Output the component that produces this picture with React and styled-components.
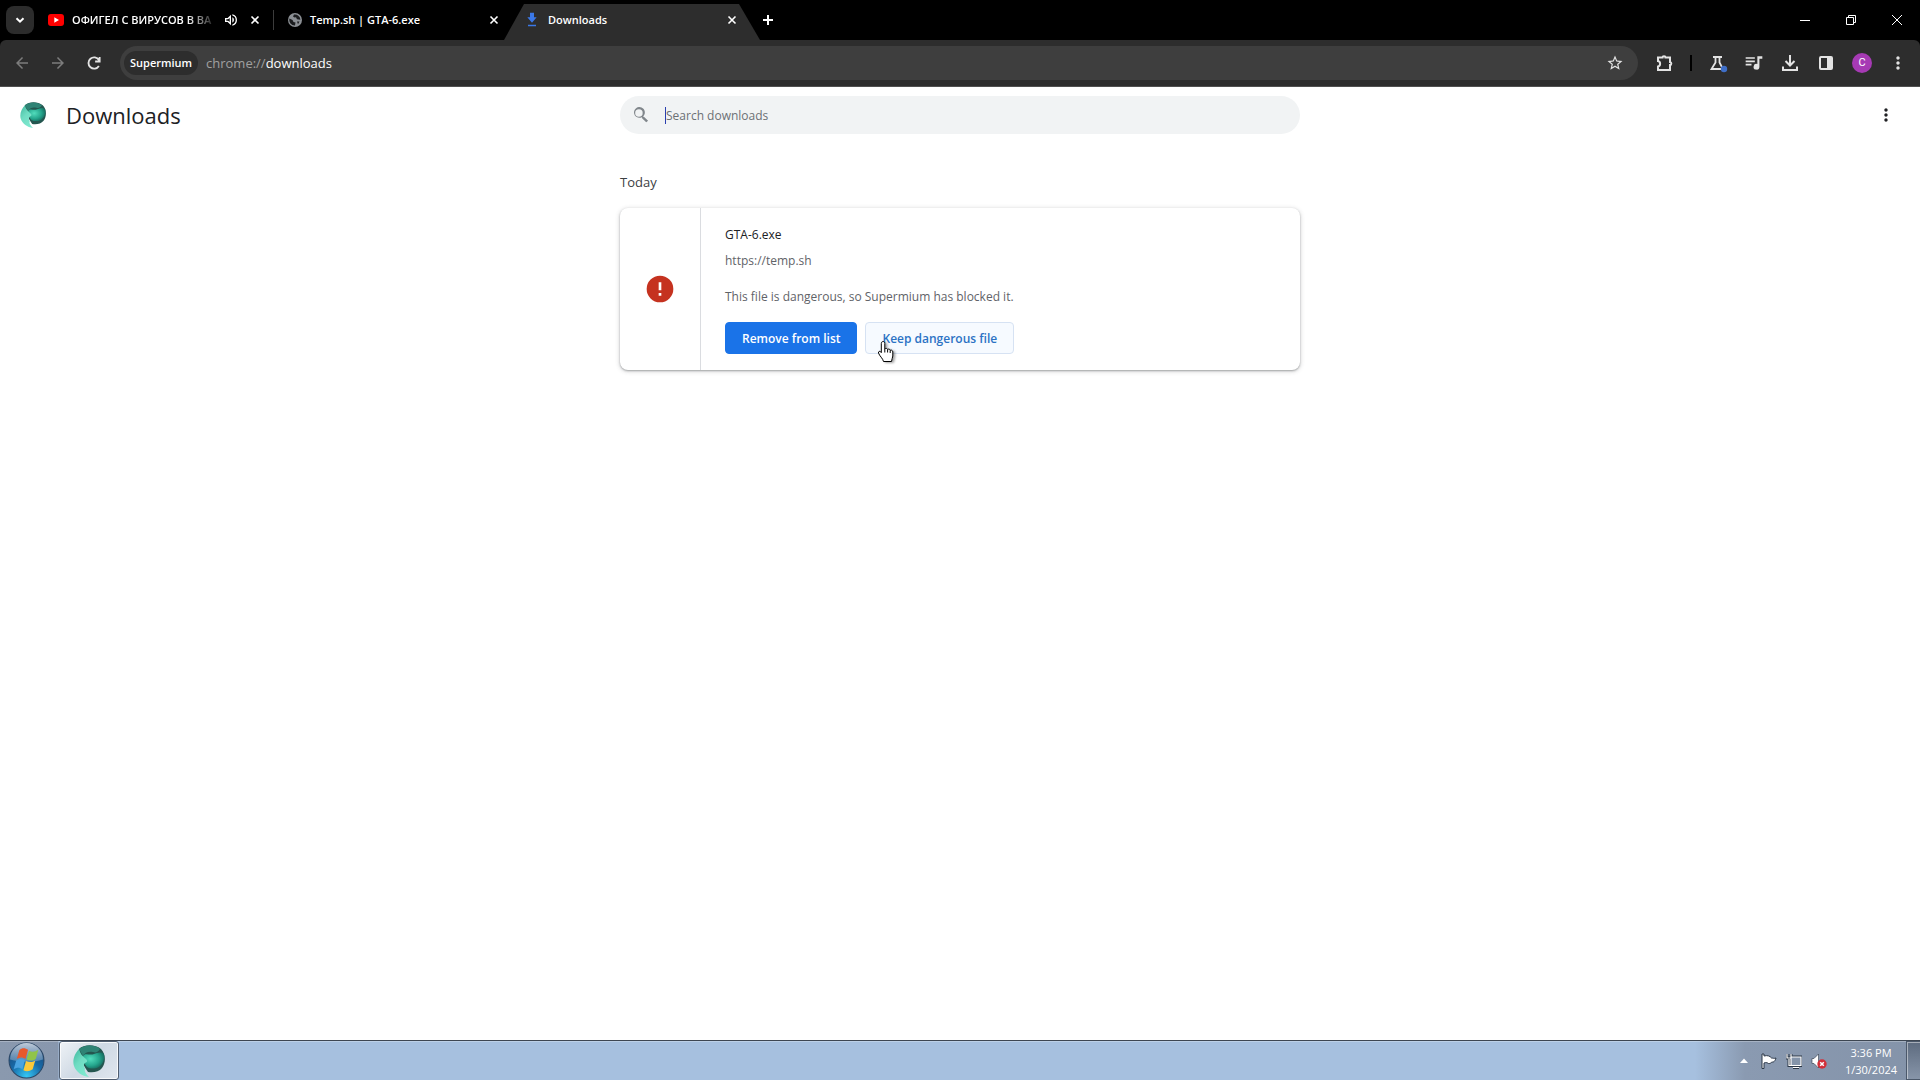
import styled, { createGlobalStyle, css } from "styled-components";

const GlobalStyle = createGlobalStyle`
  * {
    box-sizing: border-box;
  }
  body {
    margin: 0;
    background-color: #fff;
    color: #202124;
    font-family: "Open Sans", "Noto Sans", sans-serif;
    font-size: 12px;
  }
  button {
    border: none;
    background: none;
    padding: 0;
    margin: 0;
    color: inherit;
    font-family: inherit;
    font-size: inherit;
  }
  svg {
    display: block;
    flex: none;
  }
`;

const Screen = styled.div`
  display: flex;
  flex-direction: column;
  min-height: 100vh;
  background-color: #000;
`;

/* tab strip */

const TabStrip = styled.header`
  display: flex;
  align-items: center;
  height: 40px;
  padding-left: 6px;
  color: #fff;
`;

const TabSearch = styled.button`
  display: flex;
  align-items: center;
  justify-content: center;
  width: 28px;
  height: 28px;
  border-radius: 8px;
  background-color: #2c2c2c;
`;

const Tab = styled.div`
  display: flex;
  align-items: center;
  gap: 8px;
  width: 240px;
  height: 20px;
  padding: 0 12px 0 14px;
  ${(props) =>
    props.$divider &&
    css`
      padding-right: 10px;
      border-right: 1px solid #3c3c3c;
    `}
  ${(props) =>
    props.$active &&
    css`
      width: 256px;
      height: 36px;
      margin-left: -10px;
      padding: 0 20px 4px;
      align-self: flex-end;
      background-color: #2d2d2d;
      clip-path: polygon(20px 0, 235px 0, 100% 100%, 0 100%);
    `}
`;

const TabTitle = styled.span`
  flex: 1;
  min-width: 0;
  white-space: nowrap;
  font-size: 11px;
  font-weight: 600;
  line-height: 20px;
  ${(props) =>
    props.$fade &&
    css`
      mask-image: linear-gradient(to right, #000 115px, transparent 145px);
    `}
`;

const IconButton = styled.button`
  display: flex;
  align-items: center;
  justify-content: center;
  flex: none;
  width: 16px;
  height: 16px;
`;

const WindowControls = styled.div`
  display: flex;
  margin-left: auto;
`;

const WindowButton = styled.button`
  display: flex;
  align-items: center;
  justify-content: center;
  width: 46px;
  height: 40px;
`;

/* toolbar */

const Toolbar = styled.nav`
  display: flex;
  align-items: center;
  height: 47px;
  padding: 0 4px;
  border-bottom: 1px solid #505050;
  border-radius: 6px 6px 0 0;
  background-color: #2d2d2d;
  color: #e3e3e3;
`;

const NavButtons = styled.div`
  display: flex;
  margin-right: 8px;
`;

const ToolButton = styled(IconButton)`
  width: 36px;
  height: 36px;
  color: ${(props) => (props.$muted ? "#7c7c7c" : "#e3e3e3")};
`;

const Omnibox = styled.div`
  display: flex;
  align-items: center;
  flex: 1;
  height: 34px;
  margin-right: 8px;
  padding: 0 15px 0 4px;
  border-radius: 17px;
  background-color: #3e3e3e;
`;

const Chip = styled.span`
  padding: 0 6px;
  border-radius: 12px;
  background-color: #2d2d2d;
  color: #fff;
  font-size: 11px;
  font-weight: 600;
  line-height: 24px;
`;

const Address = styled.a`
  flex: 1;
  margin-left: 8px;
  color: #a0a0a0;
  font-size: 13px;
  text-decoration: none;
  span {
    color: #fff;
  }
`;

const ToolDivider = styled.span`
  width: 2px;
  height: 16px;
  margin: 0 8px;
  background-color: #000;
`;

const Avatar = styled.span`
  width: 20px;
  height: 20px;
  border-radius: 50%;
  background-color: #a63ab4;
  color: #fff;
  font-family: Roboto, sans-serif;
  font-size: 11px;
  line-height: 20px;
  text-align: center;
`;

/* downloads page */

const Page = styled.main`
  flex: 1;
  background-color: #fff;
`;

const PageHeader = styled.div`
  display: grid;
  grid-template-columns: 1fr 680px 1fr;
  align-items: center;
  height: 56px;
  padding: 0 20px;
`;

const Brand = styled.div`
  display: flex;
  align-items: center;
  gap: 20px;
`;

const PageTitle = styled.h1`
  margin: 0;
  font-size: 22px;
  font-weight: 400;
  line-height: 28px;
`;

const SearchBox = styled.label`
  display: flex;
  align-items: center;
  height: 38px;
  padding: 0 11px;
  border-radius: 19px;
  background-color: #f1f3f4;
  color: #80868b;
`;

const Caret = styled.span`
  width: 1px;
  height: 17px;
  margin-left: 14px;
  background-color: #2a3fb0;
`;

const SearchInput = styled.input`
  flex: 1;
  padding: 0;
  border: none;
  outline: none;
  background: none;
  color: #202124;
  font-family: inherit;
  font-size: 12px;
  &::placeholder {
    color: #6c7074;
    opacity: 1;
  }
`;

const MenuButton = styled(IconButton)`
  justify-self: end;
  width: 28px;
  height: 28px;
  color: #202124;
`;

const List = styled.section`
  width: 680px;
  margin: 0 auto;
  padding-top: 29px;
`;

const DateHeading = styled.h2`
  margin: 0 0 16px;
  color: #3c4043;
  font-size: 13px;
  font-weight: 400;
  line-height: 20px;
`;

const Card = styled.article`
  display: flex;
  border-radius: 8px;
  background-color: #fff;
  box-shadow: 0 1px 2px rgba(60, 64, 67, 0.4), 0 1px 4px 1px rgba(60, 64, 67, 0.16);
`;

const FileIcon = styled.div`
  display: flex;
  align-items: center;
  justify-content: center;
  width: 81px;
  border-right: 1px solid #dadce0;
  color: #c5321f;
`;

const FileInfo = styled.div`
  padding: 17px 24px 16px;
  line-height: 20px;
`;

const FileName = styled.div`
  font-weight: 500;
`;

const FileUrl = styled.a`
  display: block;
  margin-top: 6px;
  color: #5f6368;
  text-decoration: none;
`;

const Warning = styled.p`
  margin: 16px 0 15px;
  color: #5f6368;
`;

const Actions = styled.div`
  display: flex;
  gap: 8px;
`;

const ActionButton = styled.button`
  position: relative;
  height: 32px;
  padding: 0 16px;
  border: 1px solid ${(props) => (props.$primary ? "#1a73e8" : "#d6e2f3")};
  border-radius: 4px;
  background-color: ${(props) => (props.$primary ? "#1a73e8" : "#f6faff")};
  color: ${(props) => (props.$primary ? "#fff" : "#2b72c4")};
  font-weight: 600;
`;

const Pointer = styled.svg`
  position: absolute;
  left: 11px;
  top: 17px;
  filter: drop-shadow(2px 1px 1px rgba(0, 0, 0, 0.35));
`;

/* taskbar */

const Taskbar = styled.footer`
  display: flex;
  align-items: stretch;
  height: 40px;
  border-top: 1px solid #3d4652;
  background: linear-gradient(to right, #8a99ae, #8897ad 58px, transparent 59px),
    linear-gradient(to left, #8493a9, #8a9ab1 175px, #a6c0df 225px);
  box-shadow: inset 0 1px 0 rgba(255, 255, 255, 0.25);
  color: #fff;
`;

const StartButton = styled.button`
  display: flex;
  align-items: center;
  width: 59px;
  padding-left: 8px;
`;

const TaskButton = styled.button`
  display: flex;
  align-items: center;
  justify-content: center;
  width: 60px;
  border: 1px solid #4f5d70;
  border-radius: 3px;
  background: linear-gradient(135deg, #eef2f6, #cfd9e4 50%, #dfe6ee);
  box-shadow: inset 0 0 0 1px rgba(255, 255, 255, 0.8);
`;

const Tray = styled.div`
  display: flex;
  align-items: center;
  gap: 9px;
  margin-left: auto;
`;

const Clock = styled.time`
  width: 70px;
  font-size: 11px;
  line-height: 17px;
  text-align: center;
`;

const ShowDesktop = styled.button`
  width: 14px;
  border: 1px solid #4b586a;
  border-right: none;
  background: linear-gradient(#5d6b7f, #8795a9);
  box-shadow: inset 1px 1px 0 rgba(255, 255, 255, 0.45);
`;

const Icon = ({ d, size = 20, viewBox = "0 0 24 24", stroke, color = "currentColor" }) => (
  <svg
    width={size}
    height={size}
    viewBox={viewBox}
    fill={stroke ? "none" : color}
    stroke={stroke ? color : "none"}
    strokeWidth={stroke}
    aria-hidden="true"
  >
    <path d={d} />
  </svg>
);

const CloseIcon = () => <Icon size={10} viewBox="0 0 10 10" stroke={1.6} d="M1.5 1.5l7 7M8.5 1.5l-7 7" />;

const DotsIcon = () => (
  <Icon d="M12 8c1.1 0 2-.9 2-2s-.9-2-2-2-2 .9-2 2 .9 2 2 2zm0 2c-1.1 0-2 .9-2 2s.9 2 2 2 2-.9 2-2-.9-2-2-2zm0 6c-1.1 0-2 .9-2 2s.9 2 2 2 2-.9 2-2-.9-2-2-2z" />
);

const SupermiumLogo = ({ size, id }) => (
  <svg width={size} height={size} viewBox="0 0 32 32" aria-hidden="true">
    <defs>
      <radialGradient id={`${id}-ball`} cx="0.35" cy="0.4" r="0.7">
        <stop offset="0" stopColor="#52dcbc" />
        <stop offset="0.6" stopColor="#25a68d" />
        <stop offset="1" stopColor="#14665a" />
      </radialGradient>
      <linearGradient id={`${id}-wing`} x1="0" y1="0" x2="0.6" y2="1">
        <stop offset="0" stopColor="#3fb89e" />
        <stop offset="0.5" stopColor="#6fdcc2" />
        <stop offset="1" stopColor="#7ee8cf" />
      </linearGradient>
    </defs>
    <path d="M6 4C11-1 22-1 28 4c5 5 5 14 1 19-3 4-9 5-14 4C10 20 6 12 6 4z" fill="#24564f" />
    <path d="M10 11c2-4 7 0 11-2 3-1 7-3 10 0 1 5-1 10-5 13-4 2-9 2-12 0-3-3-4-7-4-11z" fill={`url(#${id}-ball)`} />
    <path d="M6 4C11 0 21-1 27 4c-2 3-4 4-7 3-4-1-8 0-10 4z" fill="#2f8375" />
    <path
      d="M6 4C2 8-1 15 1 21c2 6 8 10 15 11-3-3-5-6-4-8-1-3-2-4 0-6 2-1 3-2 1-4C9 11 7 8 6 4z"
      fill={`url(#${id}-wing)`}
    />
  </svg>
);

const YoutubeIcon = () => (
  <svg width="16" height="16" viewBox="0 0 16 16" aria-hidden="true">
    <rect y="2" width="16" height="12" rx="3" fill="#f00" />
    <path d="M6.3 5.2v5.6L11 8z" fill="#fff" />
  </svg>
);

const GlobeIcon = () => (
  <svg width="14" height="14" viewBox="0 0 14 14" aria-hidden="true">
    <circle cx="7" cy="7" r="7" fill="#8b8f94" />
    <path
      d="M1.500 5.500l3 1.500 1 2 2 .5-.5 3A5.500 5.500 0 0 1 1.500 5.500zM6 1.600l-1 1.900 1.500 1L8 4.200l1 2 3.400.6A5.500 5.500 0 0 0 6 1.600zM9 8.500h2.500L10 11.200z"
      fill="#1b1c1e"
    />
  </svg>
);

const StartOrb = () => (
  <svg width="37" height="37" viewBox="0 0 36 36" aria-hidden="true">
    <defs>
      <radialGradient id="orb" cx="0.5" cy="0.95" r="0.9">
        <stop offset="0" stopColor="#35c8f5" />
        <stop offset="0.5" stopColor="#176aa8" />
        <stop offset="1" stopColor="#1c4675" />
      </radialGradient>
      <linearGradient id="gloss" x1="0" y1="0" x2="0" y2="1">
        <stop offset="0" stopColor="#e8eef5" stopOpacity="0.8" />
        <stop offset="1" stopColor="#b9c9db" stopOpacity="0.35" />
      </linearGradient>
    </defs>
    <circle cx="18" cy="18" r="17" fill="url(#orb)" stroke="#2b4766" />
    <path d="M2 17a16 16 0 0 1 32 0c-9 3-22 3-32 0z" fill="url(#gloss)" />
    <path d="M11 8c3-3 6-2 8.500-.5L17 16.500c-3-2-5-2-8.500 0z" fill="#e8592b" />
    <path d="M20.500 8.500c3 1.500 6 1 9-1L27 16.500c-3 2-6 2-9 .5z" fill="#90c44a" />
    <path d="M8 18c3-2 6-2 8.500-.5L14 26.500c-3-2-5-2-8.500 0z" fill="#4aa3e0" />
    <path d="M17.500 18.500c3 1.500 6 1.500 9-.5L24 26.500c-3 2-6 2.500-9 1z" fill="#fbc93a" />
  </svg>
);

const App = () => {
  return (
    <Screen>
      <GlobalStyle />
      <TabStrip>
        <TabSearch aria-label="Search tabs">
          <Icon size={10} viewBox="0 0 10 10" stroke={2} d="M1.500 3.200L5 6.700l3.500-3.500" />
        </TabSearch>
        <Tab $divider>
          <YoutubeIcon />
          <TabTitle $fade>ОФИГЕЛ С ВИРУСОВ В ВА</TabTitle>
          <IconButton aria-label="Mute tab">
            <Icon
              size={16}
              d="M3 9v6h4l5 5V4L7 9H3zm7-.17v6.340L7.830 13H5v-2h2.830L10 8.830zM16.500 12A4.500 4.500 0 0 0 14 7.970v8.050A4.500 4.500 0 0 0 16.500 12zM14 3.230v2.060a7 7 0 0 1 0 13.420v2.060a9 9 0 0 0 0-17.540z"
            />
          </IconButton>
          <IconButton aria-label="Close tab">
            <CloseIcon />
          </IconButton>
        </Tab>
        <Tab>
          <GlobeIcon />
          <TabTitle>Temp.sh | GTA-6.exe</TabTitle>
          <IconButton aria-label="Close tab">
            <CloseIcon />
          </IconButton>
        </Tab>
        <Tab $active>
          <Icon size={16} color="#3b78e7" d="M9 1h6v7h4l-7 8-7-8h4zM6 19h12v2.500H6z" />
          <TabTitle>Downloads</TabTitle>
          <IconButton aria-label="Close tab">
            <CloseIcon />
          </IconButton>
        </Tab>
        <IconButton aria-label="New tab">
          <Icon size={12} viewBox="0 0 12 12" stroke={2} d="M6 1v10M1 6h10" />
        </IconButton>
        <WindowControls>
          <WindowButton aria-label="Minimize">
            <Icon size={10} viewBox="0 0 10 10" stroke={1} d="M0 5.500h10" />
          </WindowButton>
          <WindowButton aria-label="Restore">
            <Icon size={10} viewBox="0 0 10 10" stroke={1} d="M.5 2.500h7v7h-7zM2.500 2.500v-2h7v7h-2" />
          </WindowButton>
          <WindowButton aria-label="Close">
            <Icon size={10} viewBox="0 0 10 10" stroke={1} d="M0 0l10 10M10 0L0 10" />
          </WindowButton>
        </WindowControls>
      </TabStrip>

      <Toolbar>
        <NavButtons>
          <ToolButton $muted aria-label="Back">
            <Icon size={18} d="M20 11H7.830l5.590-5.590L12 4l-8 8 8 8 1.410-1.410L7.830 13H20v-2z" />
          </ToolButton>
          <ToolButton $muted aria-label="Forward">
            <Icon size={18} d="M12 4l-1.410 1.410L16.170 11H4v2h12.170l-5.580 5.590L12 20l8-8z" />
          </ToolButton>
          <ToolButton aria-label="Reload">
            <Icon size={18} stroke={2.5} d="M18.500 16a7.500 7.500 0 1 1 0-8M19.500 4v6h-6" />
          </ToolButton>
        </NavButtons>
        <Omnibox>
          <Chip>Supermium</Chip>
          <Address href="#downloads">
            chrome://<span>downloads</span>
          </Address>
          <IconButton aria-label="Bookmark this tab">
            <Icon
              size={18}
              d="M22 9.240l-7.190-.62L12 2 9.190 8.630 2 9.240l5.460 4.730L5.820 21 12 17.270 18.180 21l-1.630-7.030L22 9.240zM12 15.400l-3.760 2.270 1-4.280-3.320-2.880 4.380-.38L12 6.100l1.710 4.040 4.380.38-3.320 2.880 1 4.280L12 15.400z"
            />
          </IconButton>
        </Omnibox>
        <ToolButton aria-label="Extensions">
          <Icon
            viewBox="0 0 20 20"
            stroke={2}
            d="M4 4.500h4.500a1.500 1.300 0 0 1 3 0H16v4.500a1.300 1.500 0 0 1 0 3V17H4v-3.500c2.800-.6 2.800-4.800 0-5.400z"
          />
        </ToolButton>
        <ToolDivider />
        <ToolButton aria-label="Labs">
          <svg width="20" height="20" viewBox="0 0 20 20" aria-hidden="true">
            <path
              d="M5 4h9M7.500 4v5.500L3.500 16h11.500L11.500 9.500V4"
              fill="none"
              stroke="currentColor"
              strokeWidth="1.800"
            />
            <circle cx="16" cy="16" r="3.200" fill="#3f6fc8" />
          </svg>
        </ToolButton>
        <ToolButton aria-label="Media">
          <Icon d="M2 5h11v2H2zM2 9h11v2H2zM2 13h7v2H2zM16 4h6v3h-3.500v9.500a3.500 3.500 0 1 1-2.500-3.400z" />
        </ToolButton>
        <ToolButton aria-label="Downloads">
          <Icon viewBox="0 0 20 20" stroke={2} d="M10 2v10M5.500 8l4.500 4.500L14.500 8M3 13.500V17h14v-3.500" />
        </ToolButton>
        <ToolButton aria-label="Side panel">
          <svg width="18" height="18" viewBox="0 0 18 18" aria-hidden="true">
            <rect x="3" y="3" width="12" height="12" rx="1" fill="none" stroke="currentColor" strokeWidth="2" />
            <path d="M10 3h5v12h-5z" fill="currentColor" />
          </svg>
        </ToolButton>
        <ToolButton aria-label="Profile">
          <Avatar>C</Avatar>
        </ToolButton>
        <ToolButton aria-label="Menu">
          <DotsIcon />
        </ToolButton>
      </Toolbar>

      <Page>
        <PageHeader>
          <Brand>
            <SupermiumLogo size={26} id="page" />
            <PageTitle>Downloads</PageTitle>
          </Brand>
          <SearchBox>
            <Icon
              d="M15.500 14h-.79l-.28-.27A6.500 6.500 0 1 0 13 14.700l.27.28v.79l5 4.990L20.490 19l-4.990-5zm-6 0a4.500 4.500 0 1 1 0-9 4.500 4.500 0 0 1 0 9z"
            />
            <Caret />
            <SearchInput type="text" placeholder="Search downloads" aria-label="Search downloads" />
          </SearchBox>
          <MenuButton aria-label="More actions">
            <DotsIcon />
          </MenuButton>
        </PageHeader>
        <List>
          <DateHeading>Today</DateHeading>
          <Card>
            <FileIcon>
              <Icon size={32} d="M12 2a10 10 0 1 0 0 20 10 10 0 0 0 0-20zm1 15h-2v-2h2v2zm0-4h-2V7h2v6z" />
            </FileIcon>
            <FileInfo>
              <FileName>GTA-6.exe</FileName>
              <FileUrl href="#temp">https://temp.sh</FileUrl>
              <Warning>This file is dangerous, so Supermium has blocked it.</Warning>
              <Actions>
                <ActionButton $primary>Remove from list</ActionButton>
                <ActionButton>
                  Keep dangerous file
                  <Pointer width="20" height="24" viewBox="0 0 20 24" aria-hidden="true">
                    <path
                      d="M6 1.500c1.200 0 1.800.8 1.800 2V9c.8-1 2.500-.8 2.800.5 1-.8 2.400-.3 2.600.8 1.200-.6 2.600.1 2.600 1.600V16c0 2-1.300 3.300-1.300 5.500H6.500C6 18.500 2.500 16 1.500 13c-.5-1.500 1.200-2.300 2.200-1.200l.6.800v-9c0-1.300.6-2 1.700-2z"
                      fill="#fff"
                      stroke="#000"
                    />
                    <path d="M7.800 9v3.500M10.600 9.500v3M13.200 10.300v2.700" stroke="#000" />
                  </Pointer>
                </ActionButton>
              </Actions>
            </FileInfo>
          </Card>
        </List>
      </Page>

      <Taskbar>
        <StartButton aria-label="Start">
          <StartOrb />
        </StartButton>
        <TaskButton aria-label="Supermium">
          <SupermiumLogo size={32} id="task" />
        </TaskButton>
        <Tray>
          <IconButton aria-label="Show hidden icons">
            <svg width="8" height="6" viewBox="0 0 8 6" aria-hidden="true">
              <path d="M0 5l4-4.500L8 5z" fill="#fff" />
            </svg>
          </IconButton>
          <svg width="16" height="16" viewBox="0 0 16 16" aria-hidden="true">
            <path
              d="M1 1v14.500h2V10c2.500-1 3.500 0 4.500.5 2 .3 2.500-1 3.500-1.500 1.500.3 3-.5 4-4-2 .8-3 0-4.500 0-1.500-2-4-3-7.500-2V1z"
              fill="#fff"
              stroke="#2b3747"
            />
          </svg>
          <svg width="16" height="16" viewBox="0 0 16 16" aria-hidden="true">
            <path d="M5 4h10v8.500H5zM7 14.500h6M3 6v6.500h3M1 1v4h4V1" fill="none" stroke="#2b3747" strokeWidth="3" />
            <path d="M5 4h10v8.500H5z" fill="#8494aa" />
            <path
              d="M5 4h10v8.500H5zM7 14.500h6M3 6v6.500h3M1 1v4h4V1"
              fill="none"
              stroke="#fff"
              strokeWidth="1.200"
            />
          </svg>
          <svg width="16" height="16" viewBox="0 0 16 16" aria-hidden="true">
            <path d="M1 5.500h2L7.500 1v14L3 10.500H1z" fill="#fff" stroke="#2b3747" strokeWidth=".6" />
            <circle cx="11" cy="11" r="4.700" fill="#d3303a" />
            <path d="M9.200 9.200l3.600 3.600M12.800 9.200l-3.600 3.600" stroke="#fff" strokeWidth="1.500" />
          </svg>
          <Clock>
            3:36 PM
            <br />
            1/30/2024
          </Clock>
        </Tray>
        <ShowDesktop aria-label="Show desktop" />
      </Taskbar>
    </Screen>
  );
};

export default App;
